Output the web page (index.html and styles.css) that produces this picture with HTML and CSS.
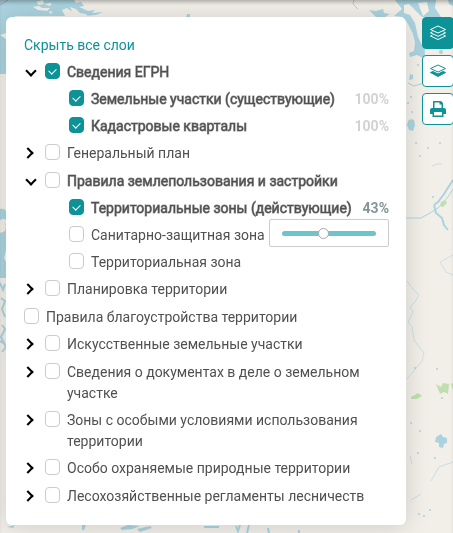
FILE: index.html
```html
<!DOCTYPE html>
<html lang="ru">

<head>
    <meta charset="UTF-8">
    <meta name="viewport" content="width=device-width, initial-scale=1.0">
    <title>Слои карты</title>
    <link rel="stylesheet" href="styles.css">
</head>

<body>
    <svg class="map" viewBox="0 0 453 533" preserveAspectRatio="xMidYMid slice" aria-hidden="true">
        <rect width="453" height="533" fill="#f2efe9"/>
        <!-- water -->
        <g fill="#aad3df">
            <path d="M0 0h74l2 3 5-1 3 4-5 1 9 4 7-1-3 3 11-1-7 3-12 1-10-3-7-5-5 2 3 6H15V74H0z"/>
            <path d="M0 209q4-1 6 2v9q-2-2-6 0zM0 222l6 2v26l-2 8 2 4v16H0z"/>
            <path d="M187 14h3v4h-4z"/>
            <path d="M395 0h41l-1 8 6 9h-19l2 12 1 28-2 1-6-3-7 2-1-4 5-2 1-8-2-9-5-10-5-7-9-1 8-7z"/>
            <path d="M369 10l7 1 7-2 1 4 6 1-5 3h-9z"/>
            <path d="M408 121q2-3 6-1l1 5-2 6-4-1-2-5z"/>
            <path d="M448 0h5v6l-4-2z"/>
            <path d="M410 74l3 1v4l-4 1zM436 437l5-3 2 3 4 1v5l-3 1-1 4-4-1v-4l-4-1z"/>
        </g>
        <!-- islands -->
        <g fill="#f2efe9">
            <path d="M404 5l5-1 13 13v28l-4-8-3-14-5-8-6-2zM0 222q5 0 6 4l-1 5-5 2zM418 3l9-1 2 9-6 5z"/>
            <path d="M36 2l7-2 1 4-5 1zM33 7l6-1 3 2 8 0-3 3-9-1zM49 11l4 1-3 2zM44 4l8-1-2 3zM66 17l2-5 4-1-2-4 6 2 4 4 6 1 3 4zM0 35l6-2v6z"/>
        </g>
        <g fill="none" stroke="#aad3df">
            <path d="M354 0l-1 4 5 5M408 83l6 3 10-3M406 218h15l9-5 8-5 10-11 5-8" stroke-width="1"/>
            <path d="M434 205l2 8 6 5 2 7 4 5M434 205l4-3 6-8 9-14" stroke-width="2"/>
            <path d="M407 281l5 7 7 7-4 7-5 5 3 5-5 10 4 5 2 13 10 13-2 8-10 12-5 6M453 255l-13 7 6 10 7 3" opacity=".55"/>
            <path d="M453 462l-14 5-3 5-5 9M411 500l10-6M410 456l2 8M432 166l5-2 5 0" opacity=".6"/>
            <path d="M0 283l3 7 2-6M1 298l4 3-3 8 3 8M2 325l3 4-4 8 5 10M0 341l5 3M2 352l4-5" stroke-width="2"/>
            <path d="M83 525v5l2-5M236 526l2 5 2-6M249 525l-2 8M268 528l1 5M299 530v3M204 527h15" stroke-width="2"/>
        </g>
        <g fill="#aad3df">
            <path d="M120 528l8-3 12 1-8 3-10 1zM137 529l13-3 2 2-12 4zM7 527l8-2-2 3z"/>
            <circle cx="416" cy="143" r="1"/><circle cx="428" cy="148" r="1"/><circle cx="440" cy="143" r="1"/>
            <circle cx="420" cy="156" r="1"/><circle cx="433" cy="197" r="1"/><circle cx="415" cy="368" r="1"/>
            <circle cx="437" cy="369" r="1"/><circle cx="442" cy="398" r="1"/><circle cx="411" cy="423" r="1"/>
            <circle cx="418" cy="453" r="1"/><circle cx="420" cy="431" r="1"/><circle cx="435" cy="458" r="1"/>
            <circle cx="419" cy="514" r="1"/><circle cx="424" cy="516" r="1"/><circle cx="430" cy="510" r="1"/>
            <circle cx="408" cy="103" r="1"/><circle cx="411" cy="97" r="1"/><circle cx="412" cy="112" r="1"/>
            <circle cx="418" cy="65" r="1"/><circle cx="441" cy="52" r="2"/>
        </g>
        <!-- forests -->
        <g fill="#c0dfae">
            <path d="M441 202l4-2 2 3-4 4-3-1zM411 397l4-2 3-2 4 3-5 3-6 0z"/>
            <path d="M436 384l5 3 2-4 6 1-1 10-4-2-4 2zM451 384l2-1v7z"/>
        </g>
        <path d="M0 5l8-5" stroke="#b59bc0" stroke-width="1"/>
    </svg>

    <main class="layout">
        <section class="panel">
            <a class="hide-all" href="#">Скрыть все слои</a>
            <ul class="tree">
                <li>
                    <div class="row active">
                        <button class="toggle open" aria-label="Свернуть"></button>
                        <label><input type="checkbox" checked><span>Сведения ЕГРН</span></label>
                    </div>
                    <ul class="children">
                        <li class="row active">
                            <label><input type="checkbox" checked><span>Земельные участки (существующие)</span></label>
                            <button class="opacity">100%</button>
                        </li>
                        <li class="row active">
                            <label><input type="checkbox" checked><span>Кадастровые кварталы</span></label>
                            <button class="opacity">100%</button>
                        </li>
                    </ul>
                </li>
                <li class="row">
                    <button class="toggle" aria-label="Развернуть"></button>
                    <label><input type="checkbox"><span>Генеральный план</span></label>
                </li>
                <li>
                    <div class="row active">
                        <button class="toggle open" aria-label="Свернуть"></button>
                        <label><input type="checkbox"><span>Правила землепользования и застройки</span></label>
                    </div>
                    <ul class="children">
                        <li class="row active">
                            <label><input type="checkbox" checked><span>Территориальные зоны (действующие)</span></label>
                            <button class="opacity current">43%</button>
                            <div class="slider">
                                <input type="range" min="0" max="100" value="43" aria-label="Прозрачность">
                            </div>
                        </li>
                        <li class="row">
                            <label><input type="checkbox"><span>Санитарно-защитная зона</span></label>
                        </li>
                        <li class="row">
                            <label><input type="checkbox"><span>Территориальная зона</span></label>
                        </li>
                    </ul>
                </li>
                <li class="row">
                    <button class="toggle" aria-label="Развернуть"></button>
                    <label><input type="checkbox"><span>Планировка территории</span></label>
                </li>
                <li class="row">
                    <label><input type="checkbox"><span>Правила благоустройства территории</span></label>
                </li>
                <li class="row">
                    <button class="toggle" aria-label="Развернуть"></button>
                    <label><input type="checkbox"><span>Искусственные земельные участки</span></label>
                </li>
                <li class="row">
                    <button class="toggle" aria-label="Развернуть"></button>
                    <label><input type="checkbox"><span>Сведения о документах в деле о земельном участке</span></label>
                </li>
                <li class="row">
                    <button class="toggle" aria-label="Развернуть"></button>
                    <label><input type="checkbox"><span>Зоны с особыми условиями использования территории</span></label>
                </li>
                <li class="row">
                    <button class="toggle" aria-label="Развернуть"></button>
                    <label><input type="checkbox"><span>Особо охраняемые природные территории</span></label>
                </li>
                <li class="row">
                    <button class="toggle" aria-label="Развернуть"></button>
                    <label><input type="checkbox"><span>Лесохозяйственные регламенты лесничеств</span></label>
                </li>
            </ul>
        </section>

        <nav class="tools">
            <button class="tool selected" aria-label="Слои">
                <svg viewBox="0 0 16 16" fill="none" stroke="currentColor" stroke-linejoin="round">
                    <path d="M8 1l7.500 3.500L8 8 .5 4.500z"/>
                    <path d="M2.500 6.800l-2 1L8 11.300l7.500-3.500-2-1M2.500 10l-2 1L8 14.500l7.500-3.500-2-1"/>
                </svg>
            </button>
            <button class="tool" aria-label="Базовый слой">
                <svg viewBox="0 0 16 16" fill="none" stroke="currentColor" stroke-linejoin="round">
                    <path d="M8 2l7.500 3.500L8 9 .5 5.500z"/>
                    <path d="M3 8.500l-2.500 1L8 13.500l7.500-4-2.500-1-5 2.500z" fill="currentColor"/>
                </svg>
            </button>
            <button class="tool" aria-label="Печать">
                <svg viewBox="0 0 16 16" fill="currentColor">
                    <path d="M3 7V0h8l2 2v5h1q2 0 2 2v4h-2.500v3h-11v-3H0V9q0-2 2-2zm1.500 0h7V3.500H9.500v-2h-5zM4 11v3.500h8V11z" fill-rule="evenodd"/>
                </svg>
            </button>
        </nav>
    </main>
</body>

</html>
```
FILE: styles.css
```css
* {
    margin: 0;
    padding: 0;
    box-sizing: border-box;
}

body {
    min-height: 100vh;
    font-family: Roboto, 'Liberation Sans', sans-serif;
    font-size: 14px;
    line-height: 21px;
    color: #505050;
    background: #f2efe9;
    overflow-x: hidden;
}

button {
    font: inherit;
    border: none;
    background: none;
    cursor: pointer;
}

ul {
    list-style: none;
}

.map {
    position: fixed;
    inset: 0;
    width: 100%;
    height: 100%;
    z-index: -1;
}

.layout {
    display: flex;
    align-items: flex-start;
    gap: 16px;
    padding: 17px 0 8px 6px;
    box-shadow: inset 0 4px 4px -2px rgba(0, 0, 0, 0.3);
}

.panel {
    flex: 1;
    padding: 18px 17px 17px 18px;
    background: #fff;
    border-radius: 6px;
    box-shadow: 0 2px 24px rgba(0, 0, 0, 0.15);
}

.hide-all {
    display: block;
    margin-bottom: 6px;
    color: #0d9297;
    text-decoration: none;
}

.tree,
.children {
    display: flex;
    flex-direction: column;
    gap: 6px;
}

.children {
    margin: 5px 0 0 45px;
}

.row {
    position: relative;
    display: flex;
    align-items: flex-start;
}

.row label {
    display: flex;
    align-items: flex-start;
    gap: 7px;
    cursor: pointer;
}

.active label {
    -webkit-text-stroke: 1px rgba(80, 80, 80, 0.6);
}

.toggle {
    flex: none;
    width: 21px;
    height: 22px;
    display: flex;
    align-items: center;
}

.toggle::before {
    content: '';
    width: 6px;
    height: 6px;
    margin-bottom: 2px;
    border: solid #000;
    border-width: 2px 2px 0 0;
    transform: rotate(45deg);
}

.toggle.open::before {
    margin: 0 0 4px 3px;
    transform: rotate(135deg);
}

input[type=checkbox] {
    appearance: none;
    flex: none;
    width: 15px;
    height: 16px;
    margin-top: 1px;
    border: 1px solid #ccc;
    border-radius: 4px;
    background: #fff;
}

input[type=checkbox]:checked {
    border-color: #0d9297;
    background: #0d9297;
}

input[type=checkbox]:checked::before {
    content: '';
    display: block;
    width: 4px;
    height: 6px;
    margin: 3px auto 0;
    border: solid #fff;
    border-width: 0 1px 1px 0;
    transform: rotate(45deg);
}

.opacity {
    margin-left: auto;
    font-weight: 700;
    color: #d2d2d2;
}

.opacity.current {
    color: #84959a;
}

.slider {
    position: absolute;
    top: 100%;
    right: 0;
    z-index: 1;
    display: flex;
    align-items: center;
    width: 120px;
    height: 28px;
    padding: 0 12px;
    background: #fff;
    border: 1px solid #ccc;
    border-radius: 2px;
}

input[type=range] {
    appearance: none;
    width: 100%;
    height: 5px;
    border-radius: 3px;
    background: #6cc5cb;
}

input[type=range]::-webkit-slider-thumb {
    appearance: none;
    width: 11px;
    height: 11px;
    background: #fff;
    border: 1px solid #aaa;
    border-radius: 50%;
}

.tools {
    display: flex;
    flex-direction: column;
    gap: 6px;
    margin-right: -1px;
}

.tool {
    display: flex;
    align-items: center;
    justify-content: center;
    width: 32px;
    height: 32px;
    color: #0d9297;
    background: #fff;
    border: 1px solid #0d9297;
    border-radius: 4px;
}

.tool.selected {
    color: #fff;
    background: #0d9297;
}

.tool svg {
    width: 16px;
    height: 16px;
}
```
